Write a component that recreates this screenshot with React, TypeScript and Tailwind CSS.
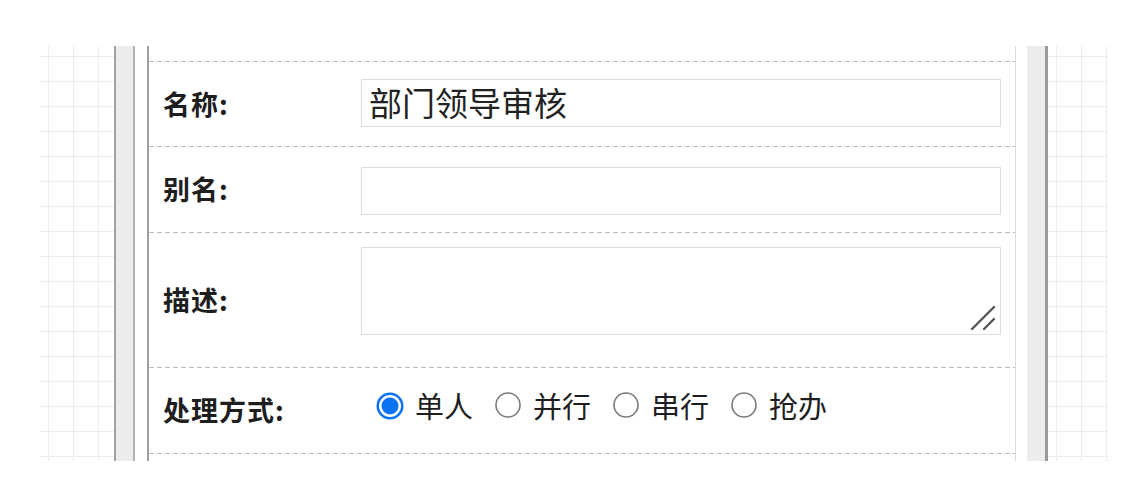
import React from "react";

const cjk = "font-['Noto_Sans_CJK_SC','Noto_Sans',sans-serif]";

const dashed =
  "h-px w-full bg-[repeating-linear-gradient(to_right,#b8b8b8_0_5px,transparent_5px_8px)]";

const gridBg =
  "bg-[linear-gradient(to_right,#ececec_1px,transparent_1px),linear-gradient(to_bottom,#ececec_1px,transparent_1px)] bg-[size:25px_25px] bg-[position:8px_10px]";

function Radio({ checked }: { checked?: boolean }) {
  return (
    <svg width="30" height="30" viewBox="0 0 30 30" className="shrink-0">
      {checked ? (
        <>
          <circle cx="15" cy="15" r="13.5" fill="#0b72f0" />
          <circle cx="15" cy="15" r="11" fill="#fff" />
          <circle cx="15" cy="15" r="8.5" fill="#0b72f0" />
        </>
      ) : (
        <circle cx="15" cy="14" r="12" fill="#fff" stroke="#7a7a7a" strokeWidth="1.6" />
      )}
    </svg>
  );
}

function Row({
  label,
  children,
  className = "",
}: {
  label: string;
  children: React.ReactNode;
  className?: string;
}) {
  return (
    <>
      <div className={`flex items-center pl-[14px] pr-[14px] ${className}`}>
        <div
          className={`w-[198px] shrink-0 text-[27px] tracking-[1px] font-bold text-[#1e1e1e] ${cjk}`}
        >
          {label}
        </div>
        {children}
      </div>
      <div className={dashed} />
    </>
  );
}

export default function App() {
  const options = ["单人", "并行", "串行", "抢办"];
  return (
    <div className="w-[1126px] h-[488px] bg-white pt-[46px] overflow-hidden">
      <div className="flex h-[415px]">
        <div className="w-[40px]" />
        <div className={`w-[74px] ${gridBg}`} />
        <div className="w-[2px] bg-[#a3a3a3]" />
        <div className="w-[17px] bg-[#ececec]" />
        <div className="w-[2px] bg-[#b3b3b3]" />
        <div className="w-[12px]" />
        <div className="w-[2px] bg-[#a0a0a0]" />

        {/* form panel */}
        <div className="w-[867px] border-r border-[#dcdcdc] flex flex-col">
          <div className="h-[15px]" />
          <div className={dashed} />

          <Row label="名称:" className="h-[84px]">
            <div
              className={`flex-1 h-[48px] mt-[-3px] border border-[#dedede] pl-[7px] flex items-center text-[33px] text-[#222] ${cjk}`}
            >
              部门领导审核
            </div>
          </Row>

          <Row label="别名:" className="h-[85px]">
            <div className="flex-1 h-[48px] mt-[2px] border border-[#dedede]" />
          </Row>

          <Row label="描述:" className="h-[134px]">
            <div className="flex-1 h-[88px] self-start mt-[14px] border border-[#dedede] relative">
              <svg
                width="28"
                height="28"
                viewBox="0 0 28 28"
                className="absolute right-[3px] bottom-[2px]"
              >
                <line x1="3" y1="25" x2="25" y2="3" stroke="#555" strokeWidth="2.4" strokeLinecap="round" />
                <line x1="15" y1="25" x2="25" y2="15" stroke="#555" strokeWidth="2.4" strokeLinecap="round" />
              </svg>
            </div>
          </Row>

          <Row label="处理方式:" className="h-[85px]">
            <div className={`flex items-center ml-[14px] mt-[-10px] ${cjk}`}>
              {options.map((o, i) => (
                <div key={o} className="flex items-center mr-[20px]">
                  <Radio checked={i === 0} />
                  <span className="ml-[10px] text-[29px] text-[#1e1e1e]">{o}</span>
                </div>
              ))}
            </div>
          </Row>
          <div className="flex-1" />
        </div>

        <div className="w-[11px]" />
        <div className="w-[18px] bg-[#ececec]" />
        <div className="w-[3px] bg-[#9a9a9a]" />
        <div className={`w-[60px] ${gridBg}`} />
      </div>
    </div>
  );
}
